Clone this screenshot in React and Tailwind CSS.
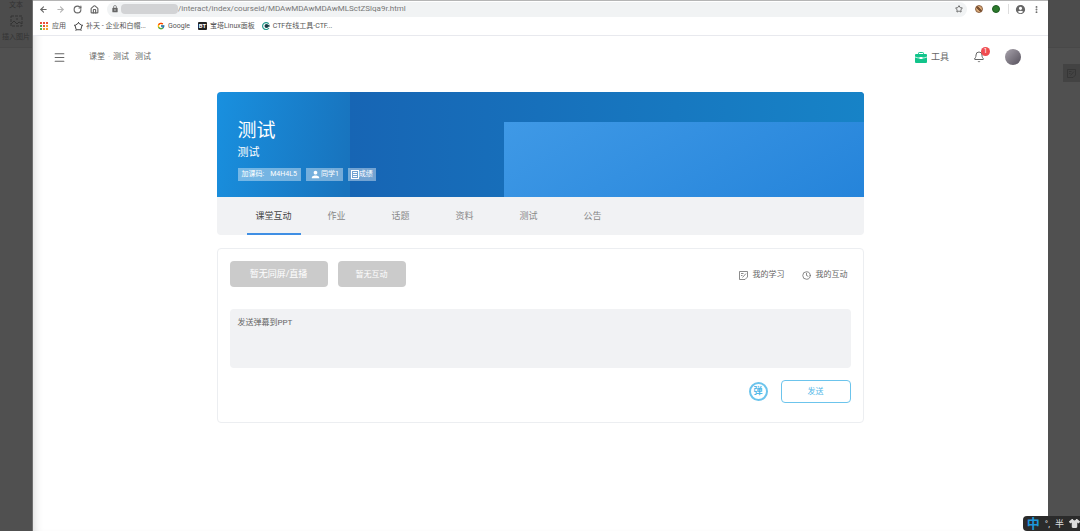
import {
  ArrowLeft,
  ArrowRight,
  RotateCw,
  House,
  Star,
  EllipsisVertical,
  Menu,
  Bell,
  Clock,
} from "lucide-react";
import { FcGoogle } from "react-icons/fc";
import { FaShirt } from "react-icons/fa6";
import { MdAccountCircle, MdLock, MdPerson } from "react-icons/md";

const tabs = ["作业", "话题", "资料", "测试", "公告"];

const dots = [
  "#e8503a", "#e8503a", "#e8503a",
  "#4caf50", "#e8503a", "#f0a030",
  "#4caf50", "#f0a030", "#f0a030",
];

function AppsIcon() {
  return (
    <svg viewBox="0 0 8 8" className="size-2">
      {dots.map((color, i) => (
        <rect key={i} x={(i % 3) * 3} y={Math.floor(i / 3) * 3} width="2" height="2" fill={color} />
      ))}
    </svg>
  );
}

function ButianIcon() {
  return (
    <svg viewBox="0 0 18 18" className="size-[9px]" fill="none" stroke="#444" strokeWidth="2">
      <path d="M9 2l7 5-2.500 8.500h-9L2 7z" />
      <path d="M9 2V0M16 7l2-1M13.500 15.500l1 2M4.500 15.500l-1 2M2 7L0 6" />
    </svg>
  );
}

function BtIcon() {
  return (
    <span className="flex h-2 w-[9px] items-center justify-center rounded-[1px] bg-[#222] text-[6px] leading-none font-bold text-white">
      BT
    </span>
  );
}

function CtfIcon() {
  return (
    <svg viewBox="0 0 16 16" className="size-2">
      <path d="M13.5 3.5A7 7 0 1 0 14 12" fill="none" stroke="#2a9d8f" strokeWidth="2.4" />
      <circle cx="9" cy="8" r="4" fill="#173f46" />
      <path d="M9 8l6-3v5z" fill="#173f46" />
    </svg>
  );
}

function ToolboxIcon() {
  return (
    <svg viewBox="0 0 24 22" className="h-[11px] w-3">
      <path d="M7 5V2.500A1.500 1.500 0 0 1 8.500 1h7A1.500 1.500 0 0 1 17 2.500V5" fill="none" stroke="#12c48b" strokeWidth="2" />
      <rect y="4" width="24" height="18" rx="2" fill="#12c48b" />
      <path d="M0 10c7 3 17 3 24 0" fill="none" stroke="#fff" strokeWidth="1.500" />
      <rect x="9" y="10" width="6" height="4" rx="1" fill="#fff" />
    </svg>
  );
}

function NoteIcon() {
  return (
    <svg viewBox="0 0 18 18" className="size-[9px]" fill="none" stroke="currentColor" strokeWidth="1.500">
      <path d="M12 17H1V1h16v11M17 12l-5 5M4 5h5M4 9h3M7 13l7-8" />
    </svg>
  );
}

function ScoreIcon() {
  return (
    <svg viewBox="0 0 16 18" className="h-[9px] w-2" fill="none" stroke="currentColor" strokeWidth="2">
      <rect x="1" y="1" width="14" height="16" />
      <path d="M4 5h8M4 9h8M4 13h8" />
    </svg>
  );
}

function InsertImageIcon() {
  return (
    <svg viewBox="0 0 13 12" className="h-3 w-[13px]" fill="none" stroke="currentColor">
      <rect x="1" y="1" width="11" height="10" strokeDasharray="3 1" />
      <path d="M1 9l3-3 3 3 2-2 3 2M7 3v2" />
    </svg>
  );
}

function Bookmark({ icon, children }) {
  return (
    <a href="#" className="flex items-center gap-[3px]">
      {icon}
      <span>{children}</span>
    </a>
  );
}

function BrowserBar() {
  return (
    <div className="border-b border-[#e8e9ee] bg-white">
      <div className="flex h-[17px] items-center gap-2 border-t border-[#b5b5b5] pr-[7px] pl-[6px] text-[#666]">
        <button aria-label="后退"><ArrowLeft size={9} strokeWidth={3} /></button>
        <button aria-label="前进" className="text-[#b5b5b5]"><ArrowRight size={9} strokeWidth={3} /></button>
        <button aria-label="刷新"><RotateCw size={9} strokeWidth={3} /></button>
        <button aria-label="主页"><House size={9} strokeWidth={3} /></button>
        <div className="flex h-[15px] min-w-0 flex-1 items-center rounded-full bg-[#f1f3f4] px-1">
          <MdLock size={8} className="shrink-0" />
          <span className="ml-0.5 h-2.5 w-[57px] shrink-0 rounded-sm bg-[#d2d3d5]" />
          <input
            aria-label="地址"
            readOnly
            value="/interact/index/courseid/MDAwMDAwMDAwMLSctZSlqa9r.html"
            className="min-w-0 flex-1 bg-transparent text-[8px] leading-3 text-[#777] outline-none"
          />
          <button aria-label="收藏"><Star size={8} strokeWidth={3} /></button>
        </div>
        <div className="flex items-center gap-[9px]">
          <span className="size-2 rounded-full border border-[#8a6040] bg-[linear-gradient(45deg,#d8a878_40%,#7a5030_40%,#7a5030_60%,#d8a878_60%)]" />
          <span className="size-2 rounded-full border border-[#1c5a20] bg-[#2c7a2c]" />
        </div>
        <div className="flex items-center gap-[6px]">
          <span className="h-2.5 w-px bg-[#ddd]" />
          <button aria-label="账户"><MdAccountCircle size={11} /></button>
          <button aria-label="菜单"><EllipsisVertical size={9} strokeWidth={3} /></button>
        </div>
      </div>
      <div className="flex h-[18px] items-center gap-[11px] pl-[7px] text-[7px] leading-3 whitespace-nowrap text-[#555]">
        <div className="flex items-center gap-2">
          <a href="#" className="flex items-center gap-1">
            <AppsIcon />
            应用
          </a>
          <Bookmark icon={<ButianIcon />}>补天 - 企业和白帽...</Bookmark>
        </div>
        <Bookmark icon={<FcGoogle size={8} />}>Google</Bookmark>
        <div className="-ml-[3px] flex items-center gap-[7px]">
          <Bookmark icon={<BtIcon />}>宝塔Linux面板</Bookmark>
          <Bookmark icon={<CtfIcon />}>CTF在线工具-CTF...</Bookmark>
        </div>
      </div>
    </div>
  );
}

function PageHeader() {
  return (
    <header className="flex h-[42px] items-center justify-between pr-[27px] pl-5 text-[#666]">
      <div className="flex items-center gap-[23px]">
        <button aria-label="导航"><Menu size={13} /></button>
        <nav className="flex text-[8px] leading-3">
          <a href="#">课堂</a>
          <span className="w-2 text-center text-[#bbb]">·</span>
          <a href="#">测试</a>
          <a href="#" className="ml-[6px]">测试</a>
        </nav>
      </div>
      <div className="flex items-center">
        <button className="flex items-center gap-1 text-[9px] leading-3">
          <ToolboxIcon />
          工具
        </button>
        <button aria-label="通知" className="relative ml-6">
          <Bell size={12} />
          <span className="absolute -top-1 left-2 flex size-[9px] items-center justify-center rounded-full bg-[#f04b50] text-[7px] leading-none text-white">
            1
          </span>
        </button>
        <span className="ml-5 size-4 rounded-full bg-linear-to-br from-[#aaa5ae] to-[#56515c]" />
      </div>
    </header>
  );
}

function CourseCard() {
  return (
    <section className="overflow-hidden rounded bg-[#f1f2f4]">
      <div className="bg-[linear-gradient(150deg,#3f99e6,#2584da),linear-gradient(90deg,#1765b4,#1783c7),linear-gradient(100deg,#1990df,#1873bd_22%)] bg-[size:360px_75px,514px_100%,100%_100%] bg-[position:right_bottom,right_top,left_top] bg-no-repeat px-[21px] pt-[27px] pb-4 text-white">
        <h1 className="text-[19px] leading-6">测试</h1>
        <p className="text-[11px] leading-5">测试</p>
        <div className="mt-[5px] flex gap-[5px] text-[7px] leading-[13px]">
          <span className="flex gap-[6px] bg-white/40 px-1">
            <span>加课码:</span>
            <span>M4H4L5</span>
          </span>
          <button className="flex items-center bg-white/40 px-1">
            <MdPerson size={11} />
            同学1
          </button>
          <button className="flex items-center bg-white/40 px-[3px]">
            <ScoreIcon />
            成绩
          </button>
        </div>
      </div>
      <nav className="flex h-[38px] pl-[30px] text-[9px] text-[#888]">
        <a
          href="#"
          className="mr-1 flex w-[54px] items-center justify-center border-b-2 border-[#3f8fe4] pt-1 text-[#444]"
        >
          课堂互动
        </a>
        {tabs.map((tab) => (
          <a key={tab} href="#" className="flex w-16 items-center justify-center pt-0.5">
            {tab}
          </a>
        ))}
      </nav>
    </section>
  );
}

function InteractPanel() {
  return (
    <section className="mt-[13px] rounded border border-[#eceef1] px-3 pt-3 pb-[19px]">
      <div className="flex items-center justify-between">
        <div className="flex gap-[10px] text-white">
          <button className="h-[26px] w-[98px] rounded-sm bg-[#cbcbcb] pt-px text-[9px]">
            暂无同屏/直播
          </button>
          <button className="h-[26px] w-[68px] rounded-sm bg-[#cbcbcb] pt-px text-[8px]">暂无互动</button>
        </div>
        <div className="flex gap-[17px] pt-0.5 pr-[3px] text-[8px] leading-3 text-[#666]">
          <a href="#" className="flex items-center gap-[5px]">
            <NoteIcon />
            我的学习
          </a>
          <a href="#" className="flex items-center gap-[5px]">
            <Clock size={9} strokeWidth={2} />
            我的互动
          </a>
        </div>
      </div>
      <textarea
        aria-label="发送弹幕到PPT"
        placeholder="发送弹幕到PPT"
        className="mt-[22px] block h-[59px] w-full resize-none rounded-sm bg-[#f1f2f4] px-2 py-2 text-[8px] leading-3 outline-none placeholder:text-[#666]"
      />
      <div className="mt-3 flex items-center justify-end gap-[13px] text-[#53b8e8]">
        <button className="flex size-[19px] items-center justify-center rounded-full border-2 border-[#6cc4ec] text-[9px] leading-none font-bold">
          弹
        </button>
        <button className="h-[23px] w-[70px] rounded-sm border border-[#6cc4ec] text-[8px]">发送</button>
      </div>
    </section>
  );
}

export default function App() {
  return (
    <div className="relative flex min-h-screen overflow-hidden bg-[#505050] font-[Roboto,'Noto_Sans_CJK_SC',sans-serif]">
      <aside className="w-[33px] shrink-0 border-r border-[#707070] text-[7px] whitespace-nowrap text-[#333]">
        <div className="flex h-12 flex-col items-center border-b border-[#484848] bg-[#4c4c4c]">
          <span className="leading-[10px]">文本</span>
          <span className="mt-[5px]"><InsertImageIcon /></span>
          <span className="mt-1 leading-3">插入图片</span>
        </div>
      </aside>
      <main className="min-w-0 flex-1 bg-white shadow-[inset_8px_0_8px_-6px_#ddd]">
        <BrowserBar />
        <PageHeader />
        <div className="mt-[14px] pr-px">
          <div className="mx-auto w-full max-w-[647px]">
            <CourseCard />
            <InteractPanel />
          </div>
        </div>
      </main>
      <aside className="flex w-8 shrink-0 flex-col text-[#333]">
        <div className="h-12 border-b border-[#484848] bg-[#4c4c4c]" />
        <div className="mt-4 flex h-[18px] items-center justify-center self-end bg-[#434343] px-1">
          <NoteIcon />
        </div>
      </aside>
      <div className="absolute right-0 bottom-0 flex h-[15px] items-center gap-[5px] rounded-l-sm bg-[#2b2b2b] pl-1 text-[9px] leading-[14px] text-[#ddd]">
        <span className="text-[13px] font-bold text-[#1c97dc]">中</span>
        <span>°,</span>
        <span>半</span>
        <FaShirt size={11} className="shrink-0" />
      </div>
    </div>
  );
}
